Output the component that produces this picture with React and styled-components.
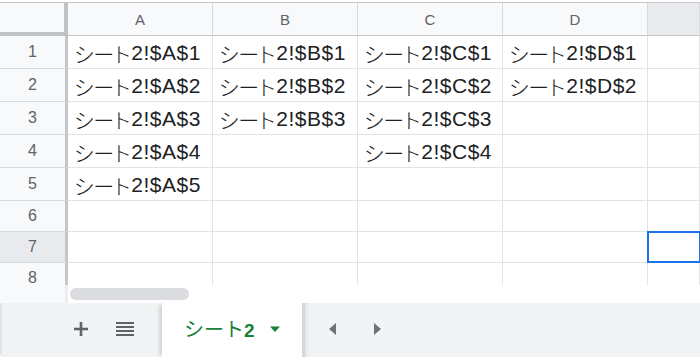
import styled, { createGlobalStyle } from 'styled-components'

const GlobalStyle = createGlobalStyle`
  html, body { margin: 0; padding: 0; background: #fff; }
  body { font-family: "Liberation Sans", "Noto Sans CJK JP", Arial, sans-serif; }
`

const Page = styled.div`
  width: 700px;
  height: 357px;
  display: flex;
  flex-direction: column;
  overflow: hidden;
  background: #fff;
`
const Grid = styled.div`
  margin-top: 2px;
  border-top: 1px solid #c7c7c7;
  height: 282px;
  overflow: hidden;
`
const Row = styled.div`
  display: flex;
  height: ${p => p.h}px;
`
const Corner = styled.div`
  flex: none;
  width: 68px;
  box-sizing: border-box;
  background: #f8f9fa;
  border-right: 4px solid #bfc1c4;
  border-bottom: 4px solid #bfc1c4;
`
const ColHead = styled.div`
  width: 145px;
  flex: ${p => p.last ? '1' : 'none'};
  box-sizing: border-box;
  background: ${p => p.active ? '#e8eaed' : '#f8f9fa'};
  border-right: 1px solid #d9dadc;
  border-bottom: 1px solid #c7c7c7;
  display: flex;
  align-items: center;
  justify-content: center;
  padding-top: 1px;
  font-size: 15px;
  color: #5f6368;
`
const RowHead = styled.div`
  width: 68px;
  flex: none;
  box-sizing: border-box;
  background: ${p => p.active ? '#e8eaed' : '#f8f9fa'};
  border-right: 3px solid #c4c6c8;
  border-bottom: 1px solid #d9dadc;
  display: flex;
  align-items: center;
  justify-content: center;
  font-size: 16px;
  color: #5f6368;
`
const Cell = styled.div`
  width: 145px;
  flex: ${p => p.last ? '1' : 'none'};
  box-sizing: border-box;
  border-right: 1px solid #e2e3e3;
  border-bottom: 1px solid #e2e3e3;
  display: flex;
  align-items: center;
  padding: 1px 0 0 6px;
  font-size: 21px;
  letter-spacing: 0.5px;
  color: #202124;
  white-space: nowrap;
  position: relative;
  ${p => p.selected && `
    &::after {
      content: '';
      position: absolute;
      left: -1px; top: -1px; right: -2px; bottom: -1px;
      border: 2px solid #1a73e8;
    }
  `}
`
const Kana = styled.span`
  font-family: "Noto Sans CJK JP", sans-serif;
  font-weight: 300;
  font-feature-settings: "palt";
  letter-spacing: 0;
  margin-right: 1px;
`
const ScrollRow = styled.div`
  display: flex;
  height: 18px;
  flex: none;
`
const ScrollStub = styled.div`
  width: 65px;
  background: #f8f9fa;
  border-right: 3px solid #eceded;
`
const Thumb = styled.div`
  margin: 3px 0 0 2px;
  width: 119px;
  height: 12px;
  border-radius: 6px;
  background: #dadce0;
`
const BottomBar = styled.div`
  flex: 1;
  display: flex;
  align-items: stretch;
  background: #f1f3f4;
  border-left: 2px solid #e3e5e7;
  border-bottom-left-radius: 4px;
`
const IconButton = styled.button`
  all: unset;
  width: ${p => p.w || 44}px;
  display: flex;
  align-items: center;
  justify-content: center;
  padding-bottom: 3px;
`
const Tab = styled.div`
  margin-left: 14px;
  width: 140px;
  background: #fff;
  display: flex;
  align-items: center;
  padding: 0 0 3px 22px;
  box-sizing: border-box;
  gap: 14px;
  box-shadow: -5px 0 3px -2px #d6d6d6;
  font-size: 20px;
  color: #188038;
`
const TabLabel = styled.span`
  font-family: "Noto Sans CJK JP", sans-serif;
  font-weight: 400;
  & b {
    font-family: "Liberation Sans", sans-serif;
    font-weight: 700;
    font-size: 19px;
  }
`
const NavGroup = styled.div`
  display: flex;
  padding-left: 6px;
  border-left: 3px solid #d5d7d9;
  box-shadow: inset 4px 0 3px -2px #e2e3e5;
`

const cols = ['A', 'B', 'C', 'D']
const data = [
  ['A', 'B', 'C', 'D'],
  ['A', 'B', 'C', 'D'],
  ['A', 'B', 'C'],
  ['A', null, 'C'],
  ['A'],
  [], [], []
]
const heights = [33, 33, 33, 33, 33, 31, 31, 31]

const App = () => {
  return (
    <Page>
      <GlobalStyle />
      <Grid>
        <Row h={33}>
          <Corner />
          {cols.map(c => <ColHead key={c}>{c}</ColHead>)}
          <ColHead last active />
        </Row>
        {data.map((r, i) => (
          <Row key={i} h={heights[i]}>
            <RowHead active={i === 6}>{i + 1}</RowHead>
            {cols.map((c, j) => (
              <Cell key={c}>
                {r[j] && <><Kana>シート</Kana>{`2!$${r[j]}$${i + 1}`}</>}
              </Cell>
            ))}
            <Cell last selected={i === 6} />
          </Row>
        ))}
      </Grid>
      <ScrollRow>
        <ScrollStub />
        <Thumb />
      </ScrollRow>
      <BottomBar>
        <IconButton w={42} style={{ marginLeft: 58 }}>
          <svg width="16" height="16" viewBox="0 0 16 16">
            <path d="M8 1v14M1 8h14" stroke="#5f6368" strokeWidth="2.6" />
          </svg>
        </IconButton>
        <IconButton w={46}>
          <svg width="18" height="16" viewBox="0 0 18 16">
            <path d="M0 2h18M0 6h18M0 10h18M0 14h18" stroke="#5f6368" strokeWidth="2.2" />
          </svg>
        </IconButton>
        <Tab>
          <TabLabel>シート<b>2</b></TabLabel>
          <svg width="12" height="8" viewBox="0 0 12 8">
            <path d="M1 1.5h10L6 7z" fill="#188038" />
          </svg>
        </Tab>
        <NavGroup>
          <IconButton w={44}>
            <svg width="10" height="14" viewBox="0 0 10 14">
              <path d="M8 1v12L1 7z" fill="#6f7378" />
            </svg>
          </IconButton>
          <IconButton w={44}>
            <svg width="10" height="14" viewBox="0 0 10 14">
              <path d="M2 1v12l7-6z" fill="#6f7378" />
            </svg>
          </IconButton>
        </NavGroup>
      </BottomBar>
    </Page>
  )
}

export default App
